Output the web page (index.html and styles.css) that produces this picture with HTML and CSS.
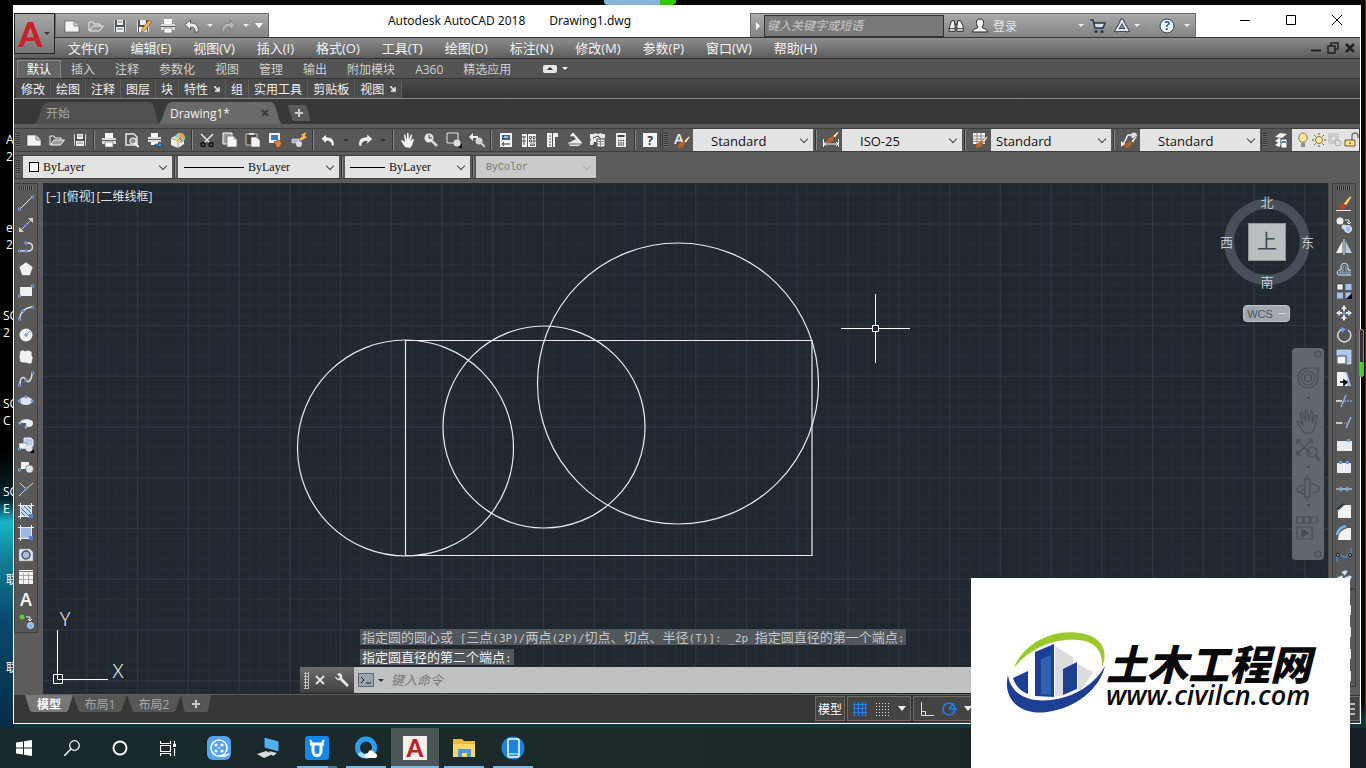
FILE: index.html
```html
<!DOCTYPE html>
<html lang="zh-CN">
<head>
    <meta charset="UTF-8">
    <meta name="viewport" content="width=device-width, initial-scale=1.0">
    <title>Autodesk AutoCAD 2018 - Drawing1.dwg</title>
    <link rel="stylesheet" href="styles.css">
</head>
<body>

<!-- Icon sprite -->
<svg class="sprite" aria-hidden="true">
    <symbol id="i-new" viewBox="0 0 16 16"><path d="M1 3h9l5 5v6H1z" fill="#f4f4f4" stroke="#4a4a4a" stroke-width=".6"/><path d="M10 3v5h5" fill="#ccc" stroke="#777" stroke-width=".8"/></symbol>
    <symbol id="i-open" viewBox="0 0 16 16"><path d="M1 13V4h4l1 2h6v2" fill="none" stroke="#f0f0f0"/><path d="M1.500 13L5 8h10.500l-4 5z" fill="#9a9a9a" stroke="#f0f0f0"/></symbol>
    <symbol id="i-save" viewBox="0 0 16 16"><path d="M2 2h12v12H2z" fill="#4b5157"/><path d="M5 2h6v5H5zM4 9h8v5H4z" fill="#f0f0f0"/><path d="M5 11h6M6 4h4" stroke="#777"/><path d="M2.500 2v12M13.500 2v12" stroke="#cfd3d8"/></symbol>
    <symbol id="i-saveas" viewBox="0 0 16 16"><path d="M1 2h12v12H1z" fill="#4b5157"/><path d="M4 2h6v5H4zM3 9h8v5H3z" fill="#f0f0f0"/><path d="M1.500 2v12M12.500 2v12" stroke="#dfe3e8"/><path d="M6 11l7-9 2.500 2-7 9-3 1z" fill="#f0b954" stroke="#7a4b18" stroke-width=".7"/></symbol>
    <symbol id="i-print" viewBox="0 0 16 16"><path d="M4 1h8v5H4z" fill="#fff"/><path d="M1 6h14v6H1z" fill="#dadada"/><path d="M1 8.500h14" stroke="#666"/><path d="M4 10h8v5H4z" fill="#fff" stroke="#777" stroke-width=".7"/></symbol>
    <symbol id="i-preview" viewBox="0 0 16 16"><path d="M2 2h8l3 3v8H2z" fill="none" stroke="#e8e8e8" stroke-width="1.500"/><circle cx="9" cy="9" r="3.200" fill="#8e9498" stroke="#fff"/><path d="M11 11l3.500 4" stroke="#fff" stroke-width="2"/></symbol>
    <symbol id="i-publish" viewBox="0 0 16 16"><path d="M4 1h7v4H4z" fill="#fff"/><path d="M1 5h13v5H1z" fill="#ddd"/><path d="M1 7.500h13" stroke="#666"/><path d="M4 10h7v3H4z" fill="#fff"/><path d="M8 12h4v-2l4 3-4 3v-2H8z" fill="#4e8ed2" stroke="#123"  stroke-width=".5"/></symbol>
    <symbol id="i-dwf" viewBox="0 0 16 16"><path d="M1 6l6-3 7 3v6l-6 4-7-3z" fill="#eee"/><path d="M1 6l7 3v7" fill="none" stroke="#999"/><circle cx="10" cy="6" r="5" fill="#8fd3c8"/><path d="M10 1a5 5 0 0 1 5 5h-5z" fill="#e9a44a"/><path d="M5 6a5 5 0 0 0 5 5V6z" fill="#e9e36b"/><path d="M7 9l3-3 2 4" fill="none" stroke="#e4564a"/></symbol>
    <symbol id="i-cut" viewBox="0 0 16 16"><path d="M2 2l9 9M14 2l-9 9" stroke="#e6e6e6" stroke-width="1.500"/><circle cx="4" cy="12.500" r="2" fill="none" stroke="#111" stroke-width="1.500"/><circle cx="12" cy="12.500" r="2" fill="none" stroke="#111" stroke-width="1.500"/></symbol>
    <symbol id="i-copy" viewBox="0 0 16 16"><path d="M1 1h9v11H1z" fill="#999" stroke="#fff"/><path d="M5 4h6l4 4v7H5z" fill="#f5f5f5" stroke="#666" stroke-width=".7"/><path d="M11 4v4h4" fill="#ccc"/></symbol>
    <symbol id="i-paste" viewBox="0 0 16 16"><path d="M1 2h11v11H1z" fill="#49433a" stroke="#cfc8b8"/><path d="M4 1h5v2H4z" fill="#ddd"/><path d="M6 5h5l4 3v7H6z" fill="#f5f5f5" stroke="#666" stroke-width=".7"/></symbol>
    <symbol id="i-match" viewBox="0 0 16 16"><path d="M1 1h11v10H1z" fill="#f0f0f0"/><path d="M3 3h7v5H3z" fill="#3f79c4"/><path d="M6 10l5-2 3 3-2 4-3 1z" fill="#d88a35" stroke="#6c3514" stroke-width=".7"/></symbol>
    <symbol id="i-block" viewBox="0 0 16 16"><path d="M1 7h7v4H1z" fill="#a8b8cc" stroke="#eee" stroke-width=".6"/><circle cx="8" cy="12" r="3" fill="#d7dce2"/><path d="M8 7l4-3-2-1 5-3-1 4 2 1-6 4z" fill="#f3bd4e"/></symbol>
    <symbol id="i-undo" viewBox="0 0 16 16"><path d="M1 6.500L6.500 2v3C12 5 15 8 14 14h-3c1-3-1-5-4.500-5v3z" fill="#f4f4f4" stroke="#444" stroke-width=".8"/></symbol>
    <symbol id="i-redo" viewBox="0 0 16 16"><path d="M15.500 7L10 2v3C4 5 1 8 2 14h3c-1-3 1-5 5-5v3z" fill="currentColor" stroke="#555" stroke-width=".5"/></symbol>
    <symbol id="i-pan" viewBox="0 0 16 16"><path d="M5 15L1 9l1-1 3 2-1-7 1-1 2 6V1h1.500l.5 7 2-6 1 .5-1 7 2-3 1 1-2 6-2 2.500z" fill="#f4f4f4"/></symbol>
    <symbol id="i-zoom" viewBox="0 0 16 16"><circle cx="6" cy="6" r="4.500" fill="#e8e8e8"/><path d="M6 3v3h3" stroke="#444" fill="none"/><path d="M9 9l5 5" stroke="#d7d7d7" stroke-width="2.500"/></symbol>
    <symbol id="i-zoomwin" viewBox="0 0 16 16"><path d="M1 1h11v10H1z" fill="none" stroke="#e8e8e8"/><circle cx="11" cy="11" r="3.500" fill="#ddd"/><path d="M12 16h4v-4z" fill="#000"/></symbol>
    <symbol id="i-zoomprev" viewBox="0 0 16 16"><path d="M0 5l4-4v3h5v2H4v3z" fill="#eee"/><circle cx="10" cy="9" r="3.500" fill="#d5d5d5"/><path d="M12 11l4 4" stroke="#ccc" stroke-width="2"/></symbol>
    <symbol id="i-props" viewBox="0 0 16 16"><path d="M2 1h12v14H2z" fill="#f4f4f4"/><path d="M4 3h8v5H4z" fill="#49637f"/><path d="M6 4h4v2H6z" fill="#8fbce8"/><path d="M4 12h8M6 10l-2 2 2 2" stroke="#333" fill="none"/></symbol>
    <symbol id="i-dc" viewBox="0 0 16 16"><path d="M1 2h14v13H1z" fill="#f4f4f4"/><path d="M6.500 2v13M3 4v9M1 5h4M1 9h4" stroke="#555"/><path d="M8.500 4.500h2v2h-2zM12 4.500h2v2h-2zM8.500 8h2v2h-2zM12 8h2v2h-2zM9.500 12h4v1.500h-4z" fill="#f4f4f4" stroke="#444" stroke-width=".8"/></symbol>
    <symbol id="i-palette" viewBox="0 0 16 16"><path d="M3 1h11v4h-3v10H3z" fill="#eee"/><path d="M5 4h2M5 7h2M5 10h2M5 13h2M8.500 1v14" stroke="#555"/></symbol>
    <symbol id="i-sheet" viewBox="0 0 16 16"><path d="M1 11l8-4 6 4-3 3H3z" fill="#e6e6e6"/><path d="M4 4l2-2 8 9" stroke="#fff" stroke-width="2" fill="none"/><path d="M2 12h12" stroke="#666"/></symbol>
    <symbol id="i-markup" viewBox="0 0 16 16"><path d="M0 2h4l1-1 3 1 3-1 1 1h3v4l-2 1 1 3H4l-1 3H0V9l1-1-1-2z" fill="#e8e8e8"/><path d="M3 6l5-2 3 3" stroke="#444" fill="none"/><path d="M7 7h8v8H7z" fill="#fff" stroke="#444"/><path d="M8 9.500h6M8 12h6M10.500 8v6" stroke="#888"/></symbol>
    <symbol id="i-calc" viewBox="0 0 16 16"><path d="M3 1h10v14H3z" fill="#f0f0f0"/><path d="M4.500 3h7v2h-7z" fill="#444"/><path d="M5 8.500h6M5 11h6M5 13h6" stroke="#555" stroke-width="1.500" stroke-dasharray="1.500 .8"/></symbol>
    <symbol id="i-help" viewBox="0 0 16 16"><path d="M1 1h14v14H1z" fill="#f4f4f4"/><text x="8" y="13" text-anchor="middle" class="svg-bold" fill="#333">?</text></symbol>
    <symbol id="i-brush" viewBox="0 0 16 16"><path d="M6 11l4-2 1 2-2 4-4 1-2-1z" fill="#b9622a"/><path d="M10 9l5-5 1 1-4 6z" fill="#f4e7d3" stroke="#6c3514" stroke-width=".5"/></symbol>
    <symbol id="i-textstyle" viewBox="0 0 16 16"><text x="0" y="12" class="svg-style" fill="#eee">A</text><use href="#i-brush"/></symbol>
    <symbol id="i-dimstyle" viewBox="0 0 16 16"><path d="M.5 7v8M15.500 7v8M1 12h14M3 10l-2 2 2 2M13 10l2 2-2 2" stroke="#f4f4f4" fill="none"/><use href="#i-brush" y="-5"/></symbol>
    <symbol id="i-tablestyle" viewBox="0 0 16 16"><path d="M1 1h12v11H1z" fill="#f4f4f4"/><path d="M1 4h12M1 7h12M1 9.500h12M5 1v11M9 1v11" stroke="#8b8b8b"/><use href="#i-brush"/></symbol>
    <symbol id="i-mleader" viewBox="0 0 16 16"><path d="M2 13L7 3h4" stroke="#f4f4f4" stroke-width="1.500" fill="none"/><path d="M0 9v6l4-3z" fill="#eee"/><circle cx="13" cy="3.500" r="3" fill="#ddd"/><use href="#i-brush"/></symbol>
    <symbol id="i-layers" viewBox="0 0 16 16"><path d="M2 5l5-4 7 1-5 4zM2 9l4-3 4 2-4 3zM2 13l4-3 4 2-4 3z" fill="#f4f4f4"/><path d="M8 7h6v9H8z" fill="#fff" stroke="#456"/><path d="M9 9h4v2H9z" fill="#4c84c8"/></symbol>
    <symbol id="i-bulb" viewBox="0 0 16 16"><path d="M6 10C2 7 4 1 8 1s6 6 2 9z" fill="#ffe9a0" stroke="#6a5727" stroke-width=".8"/><path d="M6 11h4v4H6z" fill="#8b8b8b"/></symbol>
    <symbol id="i-sun" viewBox="0 0 16 16"><circle cx="8" cy="8" r="3.500" fill="#ffe9a0" stroke="#8a7337"/><path d="M8 1v2M8 13v2M1 8h2M13 8h2M3 3l1.500 1.500M11.500 11.500L13 13M13 3l-1.500 1.500M4.500 11.500L3 13" stroke="#6a5727"/></symbol>
    <symbol id="i-vpfreeze" viewBox="0 0 16 16"><path d="M2 2h9v9H2zM4 4h5v5H4z" fill="none" stroke="#b0b0b0"/><circle cx="11" cy="11" r="3" fill="#ddd" stroke="#aaa"/></symbol>
    <symbol id="i-lock" viewBox="0 0 16 16"><path d="M9 8V4a3 3 0 0 1 6 0v2" fill="none" stroke="#777" stroke-width="1.500"/><path d="M2 8h10v6H2z" fill="#ffe28a" stroke="#6a5727"/><path d="M7 10v2" stroke="#333"/></symbol>

    <!-- draw tools -->
    <symbol id="d-line" viewBox="0 0 16 16"><path d="M2 14L14 2" stroke="#eee"/><path d="M.5 13h2v2h-2zM13.500 1h2v2h-2z" fill="#223" stroke="#7fb0ea"/></symbol>
    <symbol id="d-xline" viewBox="0 0 16 16"><path d="M2 14L14 2" stroke="#d0d0d0"/><path d="M1 15v-5l5 5zM15 1v5l-5-5z" fill="#d0d0d0"/><path d="M7 7h2v2H7z" fill="#223" stroke="#6e88f5"/></symbol>
    <symbol id="d-pline" viewBox="0 0 16 16"><path d="M1 12h9c6 0 6-8 0-8H8" stroke="#ddd" stroke-width="1.500" fill="none"/><path d="M.5 11h2v2h-2zM7 11h2v2H7zM7 3h2v2H7z" fill="#223" stroke="#7fb0ea"/></symbol>
    <symbol id="d-polygon" viewBox="0 0 16 16"><path d="M8 1l7 5-3 8.500H4L1 6z" fill="#eef0f2" stroke="#444" stroke-width=".5"/></symbol>
    <symbol id="d-rect" viewBox="0 0 16 16"><path d="M2 4h12v9H2z" fill="#eef0f2"/><path d="M.5 12h2v2h-2zM13.500 2h2v2h-2z" fill="#223" stroke="#7fb0ea"/></symbol>
    <symbol id="d-arc" viewBox="0 0 16 16"><path d="M2 14C2 8 6 3 14 2" stroke="#ddd" stroke-width="1.500" fill="none"/><path d="M.5 13h2v2h-2zM4 5h2v2H4zM13.500 1h2v2h-2z" fill="#223" stroke="#7fb0ea"/></symbol>
    <symbol id="d-circle" viewBox="0 0 16 16"><circle cx="8" cy="8" r="6.500" fill="#eef0f2"/><path d="M7 7h2v2H7zM9 7l3-3" fill="none" stroke="#5f92cf"/></symbol>
    <symbol id="d-cloud" viewBox="0 0 16 16"><path d="M2 2q3-2 5 0 4-2 7 1-1 3 1 6-1 3-1 5-3 2-5 0-4 0-7-1 0-3-1-5 1-3 1-6z" fill="#f2f2f2" stroke="#444" stroke-width=".5"/></symbol>
    <symbol id="d-spline" viewBox="0 0 16 16"><path d="M2 14C2 5 6 5 8 9s6 0 6-7" stroke="#ddd" stroke-width="1.500" fill="none"/><path d="M.5 13h2v2h-2zM7 8h2v2H7zM13.500 1h2v2h-2z" fill="#223" stroke="#7fb0ea"/></symbol>
    <symbol id="d-ellipse" viewBox="0 0 16 16"><ellipse cx="8" cy="8" rx="6.500" ry="4" fill="#dfe4ee"/><path d="M.5 7h2v2h-2zM13 7h2v2h-2zM7 3h2v2H7z" fill="#9ab" stroke="#6f9edc"/></symbol>
    <symbol id="d-earc" viewBox="0 0 16 16"><path d="M2 8c0-5 13-5 13 0s-6 4-7 4V8z" fill="#eef0f2"/><path d="M1 7h2v2H1zM7 11h2v2H7z" fill="#dfe4ee" stroke="#6f9edc"/></symbol>
    <symbol id="d-insert" viewBox="0 0 16 16"><path d="M6 1h7l2 2v6H6z" fill="#b8cdea" stroke="#eee"/><path d="M1 6h8v6H1z" fill="#eef0f2" stroke="#555" stroke-width=".5"/><circle cx="11" cy="11" r="3.500" fill="#dfe4ea"/><path d="M.5 11h2v2h-2z" fill="#223" stroke="#7fb0ea"/><path d="M12 16h4v-4z" fill="#000"/></symbol>
    <symbol id="d-mkblock" viewBox="0 0 16 16"><path d="M3 3h8v7H3z" fill="#eef0f2"/><circle cx="11.500" cy="10" r="4" fill="#dfe4ea" stroke="#555" stroke-width=".6"/><path d="M.5 10h2v2h-2z" fill="#223" stroke="#7fb0ea"/></symbol>
    <symbol id="d-point" viewBox="0 0 16 16"><path d="M2 2l6 6 7-6M8 8l-7 7" stroke="#cfd8d8" fill="none"/><path d="M7 7h2v2H7z" fill="#223" stroke="#7fb0ea"/></symbol>
    <symbol id="d-hatch" viewBox="0 0 16 16"><path d="M3 3h10v10H3z" fill="#c5d8f3"/><path d="M3 9l4 4M3 5l8 8M6 3l7 7M10 3l3 3" stroke="#456e9f"/><path d="M0 2.500h16M0 13.500h11M2.500 0v16M13.500 0v11" stroke="#f0f0f0"/><path d="M11 11h4v4h-4z" fill="#4e83ce"/></symbol>
    <symbol id="d-grad" viewBox="0 0 16 16"><path d="M3 3h10v10H3z" fill="#9db9e8"/><path d="M0 2.500h16M0 13.500h11M2.500 0v16M13.500 0v11" stroke="#f0f0f0"/><path d="M11 11h4v4h-4z" fill="#4e83ce"/></symbol>
    <symbol id="d-region" viewBox="0 0 16 16"><path d="M1 2h11l3 3v9H1z" fill="#dfe7f2" stroke="#888" stroke-width=".5"/><circle cx="8" cy="8" r="4" fill="#aebccd" stroke="#3f5572" stroke-width="1.500"/></symbol>
    <symbol id="d-table" viewBox="0 0 16 16"><path d="M1 1h14v14H1z" fill="#f4f4f4"/><path d="M1 2.500h14" stroke="#778"/><path d="M1 6.500h14M1 10.500h14M5.500 4v11M10.500 4v11" stroke="#aaa"/></symbol>
    <symbol id="d-mtext" viewBox="0 0 16 16"><text x="8" y="15" text-anchor="middle" class="svg-big" fill="#fff">A</text></symbol>
    <symbol id="d-addsel" viewBox="0 0 16 16"><circle cx="4" cy="4" r="3" fill="#6cc04a" stroke="#2d5c1b" stroke-width=".6"/><circle cx="12.500" cy="12.500" r="3" fill="#7fb6ee" stroke="#e6f0fa" stroke-width=".8"/><path d="M8 4h4v4M10 6l2 2 2-2" stroke="#eee" fill="none"/></symbol>

    <!-- modify tools -->
    <symbol id="m-erase" viewBox="0 0 16 16"><path d="M0 15.500h15" stroke="#eee"/><path d="M7 9l7-8 2 1-6 9z" fill="#f6d67a" stroke="#5a3a10" stroke-width=".6"/><path d="M3 14l1-4 3-2 3 2-1 3-3 2z" fill="#b9432a"/></symbol>
    <symbol id="m-copy" viewBox="0 0 16 16"><circle cx="4" cy="4" r="3.500" fill="#eee"/><circle cx="12" cy="12" r="3.500" fill="#9fc2ec" stroke="#eaf2fb"/><circle cx="8" cy="10" r="2.500" fill="#c9dcf3"/><path d="M9 3h4v4M11 5l2 2 2-2" stroke="#eee" fill="none"/></symbol>
    <symbol id="m-mirror" viewBox="0 0 16 16"><path d="M6.500 2v12H0z" fill="#eee"/><path d="M9.500 2v12H16z" fill="#b9cbe0"/><path d="M8 0v16" stroke="#eee"/></symbol>
    <symbol id="m-offset" viewBox="0 0 16 16"><path d="M15 14H3c-3-1-2-5 1-5h1V6c0-5 7-5 7 0v3h3" fill="none" stroke="#eee"/><path d="M15 12H4c-1 0-1-1 0-1h3V6c0-2 3-2 3 0v5h5" fill="none" stroke="#86aee0"/></symbol>
    <symbol id="m-array" viewBox="0 0 16 16"><path d="M1 1h6v6H1z" fill="#f0f0f0" stroke="#222" stroke-width=".6"/><path d="M9.500 1h6v6h-6zM1 9.500h6v6H1zM9.500 9.500h6v6h-6z" fill="#9fc2ec"/><path d="M10 16h6v-6z" fill="#000"/></symbol>
    <symbol id="m-move" viewBox="0 0 16 16"><path d="M8 0l3 4H9v2H7V4H5zM8 16l3-4H9v-2H7v2H5zM0 8l4-3v2h2v2H4v2zM16 8l-4-3v2h-2v2h2v2z" fill="#e3e9f0"/><path d="M7 7h2v2H7z" fill="#223" stroke="#7fb0ea"/></symbol>
    <symbol id="m-rotate" viewBox="0 0 16 16"><path d="M7 2a6.500 6.500 0 1 0 5 1" fill="none" stroke="#ddd" stroke-width="1.500"/><path d="M5 0l5 2-4 4z" fill="#6f9ff0"/></symbol>
    <symbol id="m-scale" viewBox="0 0 16 16"><path d="M1 1h14v14H1z" fill="#a8c6ee" stroke="#eee" stroke-width=".6"/><path d="M1 7h9v8H1z" fill="#f4f4f4" stroke="#444"/></symbol>
    <symbol id="m-stretch" viewBox="0 0 16 16"><path d="M2 1h9l4 14H2z" fill="#9fc2ec"/><path d="M1 1h7l3 4v10H1z" fill="#f4f4f4"/><path d="M4 11h6M8 9l3 2-3 3z" stroke="#000" stroke-width="1.500"/></symbol>
    <symbol id="m-trim" viewBox="0 0 16 16"><path d="M0 8h6" stroke="#eee" stroke-width="1.500"/><path d="M8 8h8" stroke="#8eb8ea" stroke-dasharray="2 1"/><path d="M5 14L10 2" stroke="#8eb8ea" stroke-width="1.500"/></symbol>
    <symbol id="m-extend" viewBox="0 0 16 16"><path d="M0 8h6" stroke="#eee" stroke-width="1.500"/><path d="M6 8h6" stroke="#aaa" stroke-dasharray="1 1"/><path d="M10 13L15 2" stroke="#8eb8ea" stroke-width="1.500"/></symbol>
    <symbol id="m-breakpt" viewBox="0 0 16 16"><path d="M1 4h15v10H1z" fill="#e8ebf0"/><path d="M11 2h3v3h-3z" fill="#6f9edc"/></symbol>
    <symbol id="m-break" viewBox="0 0 16 16"><path d="M1 4h14v10H1z" fill="#e8ebf0"/><path d="M3 2h3v3H3zM10 2h3v3h-3z" fill="#6f9edc"/></symbol>
    <symbol id="m-join" viewBox="0 0 16 16"><path d="M0 8h16" stroke="#e6e6e6"/><path d="M4 5l4 3-4 3zM12 5L8 8l4 3z" fill="#7fa8e6"/></symbol>
    <symbol id="m-chamfer" viewBox="0 0 16 16"><path d="M2 8l7-6h6v13H2z" fill="#f2f2f2"/><path d="M1 7l7-6" stroke="#222" stroke-width="2"/><path d="M1 8l7-6" stroke="#7faee6"/></symbol>
    <symbol id="m-fillet" viewBox="0 0 16 16"><path d="M2 15c0-8 5-11 10-12h3v12z" fill="#f2f2f2"/><path d="M1 10c1-5 4-8 9-9" stroke="#7faee6" stroke-width="2.500" fill="none"/></symbol>
    <symbol id="m-blend" viewBox="0 0 16 16"><path d="M1 15v-4c3-8 6 2 9-1 3-2 1-4 5-4V1" stroke="#4f86c0" stroke-width="1.500" fill="none"/><circle cx="2" cy="8" r="1.500" stroke="#112" fill="#9bc"/><circle cx="14" cy="8" r="1.500" stroke="#112" fill="#9bc"/></symbol>
    <symbol id="m-explode" viewBox="0 0 16 16"><path d="M5 3l4-2 3 1-3 5zM1 8l6-2v5l-5 3zM9 8l5-2 2 2-3 6H8z" fill="#cfe0ef" stroke="#4b6780" stroke-width=".6"/></symbol>
</svg>

<div class="desktop">
    <div class="desktop-labels">
        <span class="label-a">A<br>2</span>
        <span class="label-e">e<br>2</span>
        <span>SC<br>2</span>
        <span>SC<br>C</span>
        <span>SC<br>E</span>
        <span class="label-e">联</span>
        <span class="label-e">联</span>
    </div>
    <div class="desktop-widget"></div>
    <div class="desktop-meter"></div>

    <div class="window">
        <button class="app-button" aria-label="应用程序菜单"><span class="app-logo">A</span><i class="caret dark"></i></button>

        <header class="titlebar">
            <div class="quick-access">
                <button aria-label="新建"><svg><use href="#i-new"/></svg></button>
                <button aria-label="打开"><svg><use href="#i-open"/></svg></button>
                <button aria-label="保存"><svg><use href="#i-save"/></svg></button>
                <button aria-label="另存为"><svg><use href="#i-saveas"/></svg></button>
                <button aria-label="打印"><svg><use href="#i-print"/></svg></button>
                <button aria-label="放弃"><svg><use href="#i-undo"/></svg></button>
                <i class="caret"></i>
                <button class="faded" aria-label="重做"><svg><use href="#i-redo"/></svg></button>
                <i class="caret"></i>
                <button class="customize" aria-label="自定义"><i class="caret big"></i></button>
            </div>
            <h1 class="title"><span>Autodesk AutoCAD 2018</span><span>Drawing1.dwg</span></h1>
            <div class="infocenter">
                <button class="expand" aria-label="展开"><i class="caret right"></i></button>
                <input type="text" class="search" placeholder="键入关键字或短语" aria-label="搜索">
                <button aria-label="查找"><svg viewBox="0 0 18 16"><path d="M2 8l2-6h3l1 6v6H1zM10 8l1-6h3l3 6v6h-7z" fill="#eee" stroke="#222"/><path d="M8 6h2M1 11h7M10 11h7" stroke="#222"/></svg></button>
                <button class="login"><svg viewBox="0 0 16 16"><path d="M8 1c5 0 4 6 2 8 0 2 5 1 5.500 5H.5C1 10 6 11 6 9 4 7 3 1 8 1z" fill="#f2f2f2" stroke="#222"/></svg>登录</button>
                <i class="caret"></i>
                <button aria-label="商店"><svg viewBox="0 0 16 16"><path d="M0 2h3l2 8h8l2-5H4" fill="#d8dde6" stroke="#26344f" stroke-width="1.500"/><circle cx="6" cy="13.500" r="1.500" fill="#26344f"/><circle cx="12" cy="13.500" r="1.500" fill="#26344f"/></svg></button>
                <button aria-label="Autodesk 360"><svg viewBox="0 0 16 16"><path d="M8 3l5 9H3z" fill="none" stroke="#26344f" stroke-width="3.500"/><circle cx="8" cy="3" r="2" fill="#dfe3ea" stroke="#26344f"/><circle cx="3" cy="12" r="2" fill="#dfe3ea" stroke="#26344f"/><circle cx="13" cy="12" r="2" fill="#dfe3ea" stroke="#26344f"/><path d="M8 3l5 9H3z" fill="none" stroke="#dfe3ea" stroke-width="2"/></svg></button>
                <i class="caret"></i>
                <button class="help" aria-label="帮助"><svg viewBox="0 0 16 16"><circle cx="8" cy="8" r="7" fill="#f4f7fa" stroke="#26344f"/><text x="8" y="12" text-anchor="middle" class="svg-bold" fill="#2460b0">?</text></svg></button>
                <i class="caret"></i>
            </div>
            <div class="window-controls">
                <button aria-label="最小化"><svg viewBox="0 0 12 12"><path d="M1 6.500h10" stroke="#000"/></svg></button>
                <button aria-label="最大化"><svg viewBox="0 0 12 12"><path d="M1.500 1.500h9v9h-9z" stroke="#000" fill="none"/></svg></button>
                <button aria-label="关闭"><svg viewBox="0 0 12 12"><path d="M1 1l10 10M11 1L1 11" stroke="#000"/></svg></button>
            </div>
        </header>

        <nav class="menubar">
            <a href="#">文件(F)</a>
            <a href="#">编辑(E)</a>
            <a href="#">视图(V)</a>
            <a href="#">插入(I)</a>
            <a href="#">格式(O)</a>
            <a href="#">工具(T)</a>
            <a href="#">绘图(D)</a>
            <a href="#">标注(N)</a>
            <a href="#">修改(M)</a>
            <a href="#">参数(P)</a>
            <a href="#">窗口(W)</a>
            <a href="#">帮助(H)</a>
            <div class="doc-controls">
                <button aria-label="最小化文档"><svg viewBox="0 0 12 12"><path d="M1 8.500h10" stroke="#222" stroke-width="2"/></svg></button>
                <button aria-label="还原文档"><svg viewBox="0 0 12 12"><path d="M4 4V1h7v6H8M1 4h7v7H1z" stroke="#222" stroke-width="1.500" fill="none"/></svg></button>
                <button aria-label="关闭文档"><svg viewBox="0 0 12 12"><path d="M2 2l8 8M10 2l-8 8" stroke="#222" stroke-width="2.500"/></svg></button>
            </div>
        </nav>

        <nav class="ribbon-tabs">
            <a href="#" class="active">默认</a>
            <a href="#">插入</a>
            <a href="#">注释</a>
            <a href="#">参数化</a>
            <a href="#">视图</a>
            <a href="#">管理</a>
            <a href="#">输出</a>
            <a href="#">附加模块</a>
            <a href="#">A360</a>
            <a href="#">精选应用</a>
            <button class="ribbon-toggle" aria-label="最小化功能区"><i></i></button>
            <i class="caret"></i>
        </nav>

        <div class="ribbon-panels">
            <button>修改</button>
            <button>绘图</button>
            <button>注释</button>
            <button>图层</button>
            <button>块</button>
            <button>特性<svg class="launcher" viewBox="0 0 6 6"><path d="M0 0l4 4M5 1v4H1" stroke="#eee" fill="none" stroke-width="1.500"/></svg></button>
            <button>组</button>
            <button>实用工具</button>
            <button>剪贴板</button>
            <button>视图<svg class="launcher" viewBox="0 0 6 6"><path d="M0 0l4 4M5 1v4H1" stroke="#eee" fill="none" stroke-width="1.500"/></svg></button>
        </div>

        <div class="file-tabs">
            <button class="file-tab"><svg class="tab-shape" viewBox="0 0 124 22" preserveAspectRatio="none"><path d="M0 22C7 19 5 1 14 0h99c6 0 6 3 8 8l3 14z"/></svg><span>开始</span></button>
            <button class="file-tab active"><svg class="tab-shape" viewBox="0 0 124 22" preserveAspectRatio="none"><path d="M0 22C7 19 5 1 14 0h99c6 0 6 18 11 22z"/></svg><span>Drawing1*</span><svg class="tab-close" viewBox="0 0 8 8"><path d="M1 1l6 6M7 1L1 7" stroke="#3c3c3c" stroke-width="2"/></svg></button>
            <button class="file-add" aria-label="新图形"><svg viewBox="0 0 26 16"><path d="M1 0h18c4 2 3 10 6 16H8C4 14 5 4 1 0z" fill="#5a5a5a"/><path d="M13 4v8M9 8h8" stroke="#ccc" stroke-width="2"/></svg></button>
        </div>

        <div class="toolbar-row">
            <div class="toolbar">
                <i class="grip"></i>
                <button aria-label="新建"><svg><use href="#i-new"/></svg></button>
                <button aria-label="打开"><svg><use href="#i-open"/></svg></button>
                <button aria-label="保存"><svg><use href="#i-save"/></svg></button>
                <i class="sep"></i>
                <button aria-label="打印"><svg><use href="#i-print"/></svg></button>
                <button aria-label="打印预览"><svg><use href="#i-preview"/></svg></button>
                <button aria-label="发布"><svg><use href="#i-publish"/></svg></button>
                <button aria-label="三维 DWF"><svg><use href="#i-dwf"/></svg></button>
                <i class="sep"></i>
                <button aria-label="剪切"><svg><use href="#i-cut"/></svg></button>
                <button aria-label="复制"><svg><use href="#i-copy"/></svg></button>
                <button aria-label="粘贴"><svg><use href="#i-paste"/></svg></button>
                <button aria-label="特性匹配"><svg><use href="#i-match"/></svg></button>
                <button aria-label="块编辑器"><svg><use href="#i-block"/></svg></button>
                <i class="sep"></i>
                <button aria-label="放弃"><svg><use href="#i-undo"/></svg></button>
                <span class="drop"><i class="caret dark"></i></span>
                <button aria-label="重做"><svg><use href="#i-redo"/></svg></button>
                <span class="drop"><i class="caret dark"></i></span>
                <i class="sep"></i>
                <button aria-label="平移"><svg><use href="#i-pan"/></svg></button>
                <button aria-label="实时缩放"><svg><use href="#i-zoom"/></svg></button>
                <button aria-label="窗口缩放"><svg><use href="#i-zoomwin"/></svg></button>
                <button aria-label="缩放上一个"><svg><use href="#i-zoomprev"/></svg></button>
                <i class="sep"></i>
                <button aria-label="特性"><svg><use href="#i-props"/></svg></button>
                <button aria-label="设计中心"><svg><use href="#i-dc"/></svg></button>
                <button aria-label="工具选项板"><svg><use href="#i-palette"/></svg></button>
                <button aria-label="图纸集"><svg><use href="#i-sheet"/></svg></button>
                <button aria-label="标记集"><svg><use href="#i-markup"/></svg></button>
                <button aria-label="计算器"><svg><use href="#i-calc"/></svg></button>
                <i class="sep"></i>
                <button aria-label="帮助"><svg><use href="#i-help"/></svg></button>
            </div>
            <div class="toolbar styles">
                <i class="grip"></i>
                <button aria-label="文字样式"><svg><use href="#i-textstyle"/></svg></button>
                <span class="combo"><select aria-label="文字样式"><option>Standard</option></select></span>
                <i class="sep"></i>
                <button aria-label="标注样式"><svg><use href="#i-dimstyle"/></svg></button>
                <span class="combo"><select aria-label="标注样式"><option>ISO-25</option></select></span>
                <i class="sep"></i>
                <button aria-label="表格样式"><svg><use href="#i-tablestyle"/></svg></button>
                <span class="combo tight"><select aria-label="表格样式"><option>Standard</option></select></span>
                <i class="sep"></i>
                <button aria-label="多重引线样式"><svg><use href="#i-mleader"/></svg></button>
                <span class="combo"><select aria-label="多重引线样式"><option>Standard</option></select></span>
            </div>
            <div class="toolbar layers">
                <i class="grip"></i>
                <button aria-label="图层特性"><svg><use href="#i-layers"/></svg></button>
                <div class="layer-box">
                    <svg><use href="#i-bulb"/></svg>
                    <svg><use href="#i-sun"/></svg>
                    <svg><use href="#i-vpfreeze"/></svg>
                    <svg><use href="#i-lock"/></svg>
                </div>
            </div>
        </div>

        <div class="toolbar-row properties">
            <div class="toolbar">
                <i class="grip"></i>
                <span class="combo bylayer color"><i class="swatch"></i><select aria-label="颜色"><option>ByLayer</option></select></span>
                <i class="sep"></i>
                <span class="combo bylayer linetype"><i class="stroke"></i><select aria-label="线型"><option>ByLayer</option></select></span>
                <i class="sep"></i>
                <span class="combo bylayer lineweight"><i class="stroke short"></i><select aria-label="线宽"><option>ByLayer</option></select></span>
                <i class="sep"></i>
                <span class="combo bycolor"><select aria-label="打印样式" disabled><option>ByColor</option></select></span>
            </div>
        </div>

        <main class="workspace">
            <div class="dock">
                <div class="toolbar vertical">
                    <i class="grip"></i>
                    <button aria-label="直线"><svg><use href="#d-line"/></svg></button>
                    <button aria-label="构造线"><svg><use href="#d-xline"/></svg></button>
                    <button aria-label="多段线"><svg><use href="#d-pline"/></svg></button>
                    <button aria-label="多边形"><svg><use href="#d-polygon"/></svg></button>
                    <button aria-label="矩形"><svg><use href="#d-rect"/></svg></button>
                    <button aria-label="圆弧"><svg><use href="#d-arc"/></svg></button>
                    <button aria-label="圆"><svg><use href="#d-circle"/></svg></button>
                    <button aria-label="修订云线"><svg><use href="#d-cloud"/></svg></button>
                    <button aria-label="样条曲线"><svg><use href="#d-spline"/></svg></button>
                    <button aria-label="椭圆"><svg><use href="#d-ellipse"/></svg></button>
                    <button aria-label="椭圆弧"><svg><use href="#d-earc"/></svg></button>
                    <button aria-label="插入块"><svg><use href="#d-insert"/></svg></button>
                    <button aria-label="创建块"><svg><use href="#d-mkblock"/></svg></button>
                    <button aria-label="点"><svg><use href="#d-point"/></svg></button>
                    <button aria-label="图案填充"><svg><use href="#d-hatch"/></svg></button>
                    <button aria-label="渐变色"><svg><use href="#d-grad"/></svg></button>
                    <button aria-label="面域"><svg><use href="#d-region"/></svg></button>
                    <button aria-label="表格"><svg><use href="#d-table"/></svg></button>
                    <button aria-label="多行文字"><svg><use href="#d-mtext"/></svg></button>
                    <button aria-label="添加选定对象"><svg><use href="#d-addsel"/></svg></button>
                </div>
            </div>

            <section class="canvas">
                <svg class="drawing">
                    <defs>
                        <!-- grid: 5 minor cells per major cell -->
                        <pattern id="minor" x="43.250" y="40.500" width="10.150" height="10.150" patternUnits="userSpaceOnUse"><path d="M0 .5h10.150M.5 0v10.150" stroke="#262e37"/></pattern>
                        <pattern id="major" x="43.250" y="40.500" width="50.750" height="50.750" patternUnits="userSpaceOnUse"><path d="M0 .5h50.750M.5 0v50.750" stroke="#2f3841"/></pattern>
                    </defs>
                    <rect width="100%" height="100%" fill="url(#minor)"/>
                    <rect width="100%" height="100%" fill="url(#major)"/>
                    <g fill="none" stroke="#e8eaec" stroke-width="1.200">
                        <path d="M362.500 157.500h406.500v215h-406.500z"/>
                        <circle cx="362.500" cy="265" r="108"/>
                        <circle cx="501" cy="244" r="101"/>
                        <circle cx="635" cy="200.500" r="140.500"/>
                    </g>
                    <g fill="none" stroke="#fff">
                        <path d="M798 145.500h31M836 145.500h31M832.500 111v31M832.500 149v31M829.500 142.500h6v6h-6z"/>
                        <path d="M14.500 447v49.500h50.500M10.500 491.500h9v9h-9z"/>
                    </g>
                    <text x="22" y="443" text-anchor="middle" class="ucs">Y</text>
                    <text x="75" y="495" text-anchor="middle" class="ucs">X</text>
                </svg>

                <div class="view-label"><span>[−]</span><span>[俯视]</span><span>[二维线框]</span></div>

                <div class="viewcube">
                    <span class="north">北</span>
                    <span class="west">西</span>
                    <button class="face">上</button>
                    <span class="east">东</span>
                    <span class="south">南</span>
                </div>
                <button class="wcs">WCS<i></i></button>

                <div class="navbar">
                    <svg viewBox="0 0 32 212" fill="none" stroke="#484e54" stroke-width="1.200">
                        <circle cx="26" cy="6" r="3"/>
                        <path d="M6 30a10 10 0 1 0 20 0V20H16A10 10 0 0 0 6 30z"/><circle cx="16" cy="30" r="7"/><circle cx="16" cy="30" r="3.500"/>
                        <path d="M11 83l-6-9 2-1 4 4-3-12 2-1 4 10-1-12h2l2 12 2-11 2 1-1 11 3-8 2 1-3 14-3 3H12z"/>
                        <path d="M5 92l14 14M20 91L5 107M5 97v-5h5M15 91h5v5M5 102v5h5"/><circle cx="20" cy="104" r="5"/><path d="M24 108l4 5" stroke-width="2"/>
                        <path d="M13 131h5v18h-5zM15.500 127v4M15.500 149v4M12 137c-10 2-8 7-2 8M18 136c12 1 12 8 2 9M12 140l-3 5 4 2"/>
                        <path d="M5 169h6v6H5zM12 169h6v6h-6zM19 169h6v6h-6zM5 179h15v12H5z"/><path d="M10 181v8l6-4z" fill="#484e54"/>
                        <path d="M15 50h3M15 119h3M15 157h3" stroke-width="2"/>
                        <circle cx="26" cy="206" r="3"/>
                    </svg>
                </div>

                <div class="command">
                    <p class="history old">指定圆的圆心或<span> [</span>三点<span>(3P)/</span>两点<span>(2P)/</span>切点、切点、半径<span>(T)]: _2p </span>指定圆直径的第一个端点<span>:</span></p>
                    <p class="history">指定圆直径的第二个端点<span>:</span></p>
                    <div class="command-line">
                        <div class="command-tools">
                            <i class="grip"></i>
                            <button aria-label="关闭"><svg viewBox="0 0 16 16"><path d="M4 4l8 8M12 4l-8 8" stroke="#ddd" stroke-width="2"/></svg></button>
                            <button aria-label="自定义"><svg viewBox="0 0 16 16"><path d="M1 4l3 3 2-2-3-3c3-2 6 0 5 4l7 7-2 2-7-7C4 9 1 7 1 4z" fill="#e4e4e4"/></svg></button>
                        </div>
                        <label class="prompt" for="cmd"><svg viewBox="0 0 16 14"><path d="M.5.5h15v13H.5z" fill="#9aa5b0" stroke="#5c6670"/><path d="M3 4l3 3-3 3M8 10h5" stroke="#222" fill="none"/></svg><i class="caret dark"></i></label>
                        <input id="cmd" type="text" placeholder="键入命令">
                    </div>
                </div>
            </section>

            <div class="dock right">
                <div class="toolbar vertical">
                    <i class="grip"></i>
                    <button aria-label="删除"><svg><use href="#m-erase"/></svg></button>
                    <button aria-label="复制"><svg><use href="#m-copy"/></svg></button>
                    <button aria-label="镜像"><svg><use href="#m-mirror"/></svg></button>
                    <button aria-label="偏移"><svg><use href="#m-offset"/></svg></button>
                    <button aria-label="阵列"><svg><use href="#m-array"/></svg></button>
                    <button aria-label="移动"><svg><use href="#m-move"/></svg></button>
                    <button aria-label="旋转"><svg><use href="#m-rotate"/></svg></button>
                    <button aria-label="缩放"><svg><use href="#m-scale"/></svg></button>
                    <button aria-label="拉伸"><svg><use href="#m-stretch"/></svg></button>
                    <button aria-label="修剪"><svg><use href="#m-trim"/></svg></button>
                    <button aria-label="延伸"><svg><use href="#m-extend"/></svg></button>
                    <button aria-label="打断于点"><svg><use href="#m-breakpt"/></svg></button>
                    <button aria-label="打断"><svg><use href="#m-break"/></svg></button>
                    <button aria-label="合并"><svg><use href="#m-join"/></svg></button>
                    <button aria-label="倒角"><svg><use href="#m-chamfer"/></svg></button>
                    <button aria-label="圆角"><svg><use href="#m-fillet"/></svg></button>
                    <button aria-label="光顺曲线"><svg><use href="#m-blend"/></svg></button>
                    <button aria-label="分解"><svg><use href="#m-explode"/></svg></button>
                </div>
                <div class="toolbar vertical">
                    <i class="grip"></i>
                    <button aria-label="前置"><svg><use href="#m-break"/></svg></button>
                    <button aria-label="后置"><svg><use href="#m-break"/></svg></button>
                    <button aria-label="置于对象之上"><svg><use href="#m-break"/></svg></button>
                    <button aria-label="置于对象之下"><svg><use href="#m-break"/></svg></button>
                </div>
            </div>
        </main>

        <footer class="statusbar">
            <div class="layout-tabs">
                <button class="active">模型</button>
                <button>布局1</button>
                <button>布局2</button>
                <button class="add" aria-label="新建布局"><svg viewBox="0 0 10 10"><path d="M5 1v8M1 5h8" stroke="#ccc" stroke-width="2"/></svg></button>
            </div>
            <div class="status-tools">
                <div class="status-group"><button class="model">模型</button></div>
                <div class="status-group">
                    <button aria-label="栅格"><svg viewBox="0 0 16 16"><path d="M1 3.500h14M1 7.500h14M1 11.500h14M2.500 1v14M6.500 1v14M10.500 1v14M13.500 1v14" stroke="#1e82ff" stroke-width="1.200"/></svg></button>
                    <button aria-label="捕捉"><svg viewBox="0 0 16 16"><path d="M1 2.500h14M1 5.500h14M1 8.500h14M1 11.500h14M1 14.500h14" stroke="#ddd" stroke-dasharray="1 2"/></svg></button>
                    <span class="drop"><i class="caret big"></i></span>
                </div>
                <div class="status-group">
                    <button aria-label="正交"><svg viewBox="0 0 16 16"><path d="M3.500 1v13.500H16M3.500 10.500h4v4" stroke="#ddd" fill="none"/></svg></button>
                    <button aria-label="极轴"><svg viewBox="0 0 16 16"><circle cx="8" cy="8" r="6" fill="none" stroke="#1e82ff" stroke-width="1.500"/><path d="M8 8h8M8 8l5-6" stroke="#1e82ff" stroke-width="1.500"/></svg></button>
                    <span class="drop"><i class="caret big"></i></span>
                </div>
                <div class="status-group last">
                    <button aria-label="自定义"><svg viewBox="0 0 16 16"><path d="M1 3h14M1 8h14M1 13h14" stroke="#ddd" stroke-width="1.500"/></svg></button>
                </div>
            </div>
        </footer>
    </div>
</div>

<div class="taskbar">
    <button aria-label="开始"><svg viewBox="0 0 16 16"><path d="M0 2.500l7-1v6H0zM8 1.300l8-1.200v7.400H8zM0 8.500h7v6l-7-1zM8 8.500h8v7.400l-8-1.200z" fill="#fff"/></svg></button>
    <button aria-label="搜索"><svg viewBox="0 0 16 16"><circle cx="10.500" cy="5.500" r="4.800" fill="none" stroke="#fff" stroke-width="1.200"/><path d="M7 9l-7 7" stroke="#fff" stroke-width="1.400"/></svg></button>
    <button aria-label="Cortana"><svg viewBox="0 0 16 16"><circle cx="8" cy="8" r="6.500" fill="none" stroke="#fff" stroke-width="2"/></svg></button>
    <button aria-label="任务视图"><svg viewBox="0 0 16 16"><path d="M.5 1v2.500h10V1M.5 5.500h10v6H.5zM.5 16v-2.500h10V16M14.500 1v3M14.500 8v8" fill="none" stroke="#fff" stroke-width="1.200"/><path d="M13 4h3v3h-3z" fill="#fff"/></svg></button>
    <div class="apps">
        <button aria-label="视频"><svg class="big" viewBox="0 0 24 24"><rect width="24" height="24" rx="6" fill="#55a3ee"/><circle cx="12" cy="12" r="8" fill="none" stroke="#fff" stroke-width="1.500"/><path d="M12 20h6l4-2" stroke="#fff" fill="none" stroke-width="1.500"/><g fill="#fff"><circle cx="9" cy="9" r="1.600"/><circle cx="15" cy="9" r="1.600"/><circle cx="9" cy="15" r="1.600"/><circle cx="15" cy="15" r="1.600"/><circle cx="12" cy="12" r="1"/></g></svg></button>
        <button aria-label="此电脑"><svg class="big" viewBox="0 0 24 24"><path d="M8 1l15 4v11L8 12z" fill="#4fb0f0" stroke="#222"/><path d="M1 18l9-3 7 3-9 4zM13 15l8 2-4 3" fill="#d8dde0"/></svg></button>
        <button class="open stacked" aria-label="U 盘工具"><svg class="big" viewBox="0 0 24 24"><rect width="24" height="24" rx="3" fill="#1687ee"/><path d="M5 8h14M8 8v7c0 6 8 6 8 0V8" fill="none" stroke="#fff" stroke-width="3"/><path d="M5 4l2 3M19 4l-2 3" stroke="#fff" stroke-width="2"/></svg></button>
        <button class="open" aria-label="浏览器"><svg class="big" viewBox="0 0 24 24"><circle cx="12" cy="11.500" r="8.500" fill="none" stroke="#2b9df4" stroke-width="5"/><path d="M5 17a9 9 0 0 0 9 3" stroke="#9fe0fa" stroke-width="4" fill="none"/><path d="M13 22c-3-1-2-5 1-5 1-4 6-3 6 0 4 0 4 5 1 5z" fill="#fff"/></svg></button>
        <button class="open current" aria-label="AutoCAD"><span class="cad-icon">A</span></button>
        <button class="open" aria-label="文件资源管理器"><svg class="big" viewBox="0 0 24 24"><path d="M1 3h9l2 2h11v16H1z" fill="#f2b63a"/><path d="M1 8h22v13H1z" fill="#ffd766"/><path d="M6 21v-8h13v8h-4v-4h-5v4z" fill="#4a9be0"/></svg></button>
        <button class="open" aria-label="手机助手"><svg class="big" viewBox="0 0 24 24"><circle cx="12" cy="12" r="11.500" fill="#1b83e0"/><rect x="7" y="3" width="11" height="18" rx="1.500" fill="none" stroke="#fff" stroke-width="1.500"/><path d="M7 18h11" stroke="#fff"/></svg></button>
    </div>
</div>

<!-- Site badge -->
<div class="brand">
    <svg viewBox="0 0 100 82">
        <path d="M8 36C18 10 48-3 74 1c22 3 29 18 22 34 1-16-7-26-24-27C48 6 24 16 8 36z" fill="#9bc92b"/>
        <path d="M2 43C-4 66 14 84 41 80c30-4 53-24 58-46-10 18-30 31-54 34C20 71 4 60 2 43z" fill="#1c3f94"/>
        <path d="M49 14l18 11v10l-10 5v24h-8zM72 32l15 8-12 18h-3z" fill="#dcdcdc"/>
        <path d="M29 20l19-8v53l-19-1zM57 37l14-7v27l-14 6zM7 46l15-7v23C14 59 9 53 7 46z" fill="#1c3f94"/>
        <path d="M35 27l10-4v40l-10-1z" fill="#2f62b0"/>
    </svg>
    <div class="brand-text">
        <strong>土木工程网</strong>
        <span>www.civilcn.com</span>
    </div>
</div>

</body>
</html>
```
FILE: styles.css
```css
/* --- Base --- */
*,
*::before,
*::after {
    box-sizing: border-box;
}

body {
    margin: 0;
    height: 100vh;
    display: flex;
    flex-direction: column;
    overflow: hidden;
    background: #000;
    font-family: "Open Sans", "Noto Sans CJK SC", sans-serif;
    font-size: 12px;
    color: #e6e6e6;
}

button {
    display: flex;
    align-items: center;
    justify-content: center;
    flex: none;
    padding: 0;
    border: none;
    background: none;
    color: inherit;
    font: inherit;
}

input, select {
    font: inherit;
    border: none;
    border-radius: 0;
    outline: none;
}

a {
    color: inherit;
    text-decoration: none;
}

svg {
    flex: none;
    width: 16px;
    height: 16px;
}

.sprite {
    display: none;
}

.svg-bold {
    font-size: 12px;
    font-weight: 700;
}

.svg-style {
    font-size: 15px;
    font-weight: 600;
}

.svg-big {
    font-size: 18px;
    font-weight: 600;
}

.caret {
    flex: none;
    border: 3px solid transparent;
    border-top-color: #eee;
    border-bottom: none;
}

.caret.dark {
    border-top-color: #333;
}

.caret.big {
    border-width: 5px 4px 0;
}

.caret.right {
    border: 4px solid transparent;
    border-left-color: #fff;
    border-right: none;
}

/* --- Desktop --- */
.desktop {
    position: relative;
    flex: 1;
    min-height: 0;
    display: flex;
    padding: 5px 4px 4px 13px;
    background: linear-gradient(#000 0, #000 450px, #06252e 500px, #19b5c5 522px, #0f7f96 560px, #0a4a6c 620px, #062b49 100%) 0 0 / 14px 100% no-repeat, linear-gradient(#0a0604 700px, #12343c 720px);
    border-right: 1px solid #5a3212;
}

.desktop-labels {
    position: absolute;
    top: 131px;
    left: 0;
    width: 13px;
    overflow: hidden;
    display: grid;
    grid-auto-rows: 88px;
    padding-left: 3px;
    line-height: 17px;
    white-space: nowrap;
    color: #fff;
}

.label-a,
.label-e {
    padding-left: 3px;
}

.desktop-widget {
    position: absolute;
    top: 0;
    left: 604px;
    width: 72px;
    height: 5px;
    background: linear-gradient(90deg, #86b3d6 0 78%, #34c800 78%);
    border-radius: 0 0 4px 4px;
}

.desktop-meter {
    position: absolute;
    z-index: 3;
    top: 329px;
    right: 1px;
    width: 5px;
    height: 48px;
    border: 1px solid #888;
    background: linear-gradient(#333 0 70%, #45d420 70%);
    border-radius: 2px;
}

/* --- Window --- */
.window {
    position: relative;
    flex: 1;
    min-width: 0;
    display: flex;
    flex-direction: column;
    border: 1px solid #fff;
    border-top: none;
    background: #5c5c5c;
    overflow: hidden;
}

.app-button {
    position: absolute;
    z-index: 2;
    top: 8px;
    left: 0;
    width: 41px;
    height: 41px;
    gap: 2px;
    border: 1px solid #222;
    background: linear-gradient(#a8a8a8, #767676);
}

.app-logo {
    font-family: Lato, sans-serif;
    font-size: 34px;
    line-height: 34px;
    font-weight: 900;
    color: #cb2027;
}

.titlebar {
    display: flex;
    height: 32px;
    padding-left: 41px;
    background: #fff;
}

.quick-access,
.infocenter {
    display: flex;
    align-items: center;
    height: 24px;
    margin-top: 8px;
    border: 1px solid #6a6a6a;
    border-bottom: none;
    background: linear-gradient(#aaa, #838383);
}

.quick-access {
    width: 214px;
    padding-left: 4px;
}

.quick-access button {
    width: 24px;
}

.quick-access .caret {
    margin: 0 3px;
}

.quick-access .faded {
    color: #b4b4b4;
}

.quick-access .customize {
    width: 14px;
}

.customize .caret {
    margin: 0;
    border-top-color: #fff;
}

.customize .caret.big {
    margin: 0;
}

.title {
    flex: 1;
    display: flex;
    justify-content: center;
    gap: 24px;
    margin: 0;
    font-family: "Noto Sans", sans-serif;
    font-size: 12px;
    line-height: 32px;
    font-weight: 400;
    color: #111;
    white-space: nowrap;
}

.infocenter {
    flex: none;
    width: 446px;
}

.infocenter button {
    width: 24px;
}

.infocenter .expand {
    width: 13px;
}

.search {
    width: 180px;
    height: 22px;
    padding: 0 2px;
    border: 1px solid #333;
    background: #7a7a7a;
}

.search::placeholder {
    color: #c9c9c9;
    font-style: italic;
}

.infocenter .login {
    width: 64px;
    justify-content: flex-start;
    gap: 5px;
    padding-left: 4px;
    margin-right: auto;
}

.infocenter .caret {
    margin-right: 2px;
}

.infocenter .help {
    width: 32px;
    margin-left: 8px;
    border-left: 1px solid #999;
}

.infocenter .help + .caret {
    margin: 0 5px 0 2px;
}

.infocenter .expand .caret {
    margin: 0;
}

.window-controls {
    display: flex;
    margin-left: 26px;
    height: 30px;
}

.window-controls button {
    width: 46px;
}

.window-controls svg,
.doc-controls svg {
    width: 12px;
    height: 12px;
}

/* --- Menu and ribbon --- */
.menubar {
    display: flex;
    align-items: center;
    gap: 22px;
    height: 22px;
    padding-left: 54px;
    border-top: 1px solid #333;
    border-bottom: 1px solid #333;
    background: linear-gradient(#8e8e8e, #5c5c5c);
    color: #f4f4f4;
    font-size: 13px;
    line-height: 18px;
    white-space: nowrap;
}

.doc-controls {
    display: flex;
    gap: 5px;
    margin-left: auto;
    padding-right: 4px;
}

.ribbon-tabs {
    display: flex;
    align-items: center;
    height: 20px;
    padding-left: 3px;
    border-bottom: 1px solid #333;
    background: #545454;
    color: #cfcfcf;
    white-space: nowrap;
}

.ribbon-tabs a {
    height: 18px;
    padding: 1px 10px 0;
    line-height: 18px;
}

.ribbon-tabs .active {
    border: 1px solid #888;
    border-bottom: none;
    padding: 0 9px;
    background: #666;
    color: #fff;
}

.ribbon-toggle {
    width: 14px;
    height: 8px;
    margin: 0 5px 0 22px;
    border-radius: 2px;
    background: #e6e6e6;
}

.ribbon-toggle i {
    border: 3px solid transparent;
    border-bottom-color: #333;
    border-top: none;
}

.ribbon-panels {
    display: flex;
    height: 20px;
    padding-left: 2px;
    border-bottom: 1px solid #8a8a8a;
    background: linear-gradient(#4c4c4c, #353535);
    color: #f0f0f0;
}

.ribbon-panels button {
    padding: 0 5px;
    border-right: 1px solid #5e5e5e;
    background: #4b4b4b;
}

.launcher {
    width: 6px;
    height: 6px;
    margin-left: 6px;
}

/* --- Drawing file tabs --- */
.file-tabs {
    display: flex;
    align-items: flex-end;
    height: 25px;
    padding-left: 20px;
    background: #383838;
}

.file-tab {
    position: relative;
    justify-content: flex-start;
    width: 124px;
    height: 22px;
    padding-left: 12px;
    color: #a8a8a8;
}

.file-tab span {
    position: relative;
}

.tab-shape {
    position: absolute;
    top: 0;
    left: 0;
    width: 100%;
    height: 100%;
    fill: #505050;
}

.active .tab-shape {
    fill: #6a6a6a;
}

.file-tab.active {
    color: #f2f2f2;
    padding-right: 13px;
}

.tab-close {
    position: relative;
    width: 8px;
    height: 8px;
    margin-left: auto;
}

.file-add {
    height: 22px;
    margin-left: 4px;
}

.file-add svg {
    width: 26px;
}

/* --- Toolbars --- */
.toolbar-row {
    display: flex;
    margin-top: 4px;
    overflow: hidden;
}

.toolbar {
    display: flex;
    flex: none;
    align-items: center;
    height: 24px;
    outline: 1px solid #3e3e3e;
    outline-offset: -1px;
    background: #585858;
}

.toolbar button {
    width: 23px;
    height: 24px;
    color: #f0f0f0;
}

.toolbar .grip {
    flex: none;
    width: 4px;
    height: 14px;
    margin: 0 2px;
    background: repeating-linear-gradient(#2e2e2e 0 1px, #707070 1px 2px);
}

.sep {
    flex: none;
    width: 6px;
    height: 20px;
    border-left: 2px solid transparent;
    border-right: 2px solid transparent;
    background: linear-gradient(90deg, #333 1px, #8a8a8a 1px) content-box;
}

.drop {
    display: flex;
    justify-content: center;
    width: 14px;
}

.combo {
    position: relative;
    display: flex;
    flex: none;
    align-items: center;
    width: 120px;
    height: 22px;
    background: #e3e3e3;
    color: #111;
}

.combo::after {
    content: "";
    position: absolute;
    right: 6px;
    top: 7px;
    width: 6px;
    height: 6px;
    border-right: 1px solid #444;
    border-bottom: 1px solid #444;
    transform: rotate(45deg);
}

.combo select {
    flex: 1;
    min-width: 0;
    height: 22px;
    padding: 2px 0 0 18px;
    appearance: none;
    background: transparent;
    color: inherit;
    font-size: 13px;
}

.combo.tight select {
    padding-left: 5px;
}

.styles,
.layers {
    margin-left: 1px;
}

.layers {
    flex: 1;
    min-width: 0;
    overflow: hidden;
}

.layer-box {
    display: flex;
    flex: 1;
    align-items: center;
    height: 22px;
    padding-left: 3px;
    background: #e3e3e3;
}

.properties {
    margin: 3px 0 4px;
}

.properties .grip {
    margin-right: 3px;
}

.bylayer select {
    padding: 0 0 0 4px;
    font-family: "Liberation Serif", serif;
    font-size: 12px;
}

.color {
    width: 149px;
    padding-left: 6px;
}

.swatch {
    width: 10px;
    height: 10px;
    border: 1px solid #000;
    background: #fff;
}

.linetype {
    width: 161px;
    padding-left: 6px;
}

.stroke {
    width: 60px;
    height: 1px;
    background: #000;
}

.stroke.short {
    width: 35px;
}

.lineweight {
    width: 125px;
    padding-left: 5px;
}

.bycolor {
    background: #cacaca;
    color: #777;
}

.bycolor select {
    padding: 0 0 0 10px;
    font-family: "Liberation Mono", monospace;
    font-size: 10px;
    opacity: 1;
}

.bycolor::after {
    border-color: #aaa;
}

/* --- Workspace --- */
.workspace {
    flex: 1;
    min-height: 0;
    display: flex;
}

.dock {
    width: 29px;
    overflow: hidden;
}

.dock.right {
    width: 32px;
    padding-left: 3px;
    border-left: 1px solid #4a4a4a;
}

.toolbar.vertical {
    flex-direction: column;
    width: 24px;
    height: auto;
    padding-bottom: 1px;
}

.vertical button {
    height: 22px;
}

.toolbar.vertical .grip {
    width: 14px;
    height: 4px;
    margin: 3px 0 2px;
    background: repeating-linear-gradient(90deg, #2e2e2e 0 1px, #707070 1px 2px);
}

.canvas {
    position: relative;
    flex: 1;
    min-width: 0;
    overflow: hidden;
    background: #212830;
}

.drawing {
    position: absolute;
    top: 0;
    left: 0;
    width: 100%;
    height: 100%;
}

.ucs {
    font-family: "Noto Sans", sans-serif;
    font-size: 20px;
    font-weight: 300;
    fill: #e8e8e8;
}

.view-label {
    position: absolute;
    top: 5px;
    left: 3px;
    display: flex;
    gap: 2px;
    line-height: 18px;
    color: #e2e2e2;
}

/* --- View cube --- */
.viewcube {
    position: absolute;
    top: 8px;
    right: 14px;
    width: 94px;
    height: 102px;
    display: grid;
    grid-template: 22px 1fr 22px / 28px 1fr 28px;
    place-items: center;
    font-size: 13px;
    line-height: 20px;
    color: #c3c7ca;
}

.viewcube::before {
    content: "";
    position: absolute;
    top: 8px;
    left: 4px;
    width: 86px;
    height: 86px;
    border: 10px solid #47505a;
    border-radius: 50%;
}

.viewcube > * {
    position: relative;
}

.north,
.south {
    grid-column: 1 / -1;
}

.west {
    justify-self: start;
}

.east {
    justify-self: end;
}

.face {
    width: 38px;
    height: 38px;
    border: 1px solid #8f979b;
    background: #b9bec1;
    font-size: 20px;
    line-height: 30px;
    color: #3e4a55;
}

.wcs {
    position: absolute;
    top: 122px;
    right: 38px;
    width: 47px;
    height: 17px;
    gap: 5px;
    border: 1px solid #c3c6cc;
    border-radius: 4px;
    background: #a3a7b0;
    color: #4e545c;
    font-family: "Liberation Sans", sans-serif;
    font-size: 11px;
}

.wcs i {
    width: 8px;
    height: 1px;
    background: #d8dade;
}

.navbar {
    position: absolute;
    top: 165px;
    right: 4px;
    width: 32px;
    height: 212px;
    border-radius: 4px;
    background: #61676e;
}

.navbar svg {
    width: 32px;
    height: 212px;
}

/* --- Command line --- */
.command {
    position: absolute;
    left: 257px;
    right: 0;
    bottom: 1px;
    display: flex;
    flex-direction: column;
    align-items: flex-start;
}

.history {
    margin: 0 0 4px 60px;
    padding: 0 2px;
    background: #52575c;
    color: #f2f2f2;
    font-family: "Noto Sans CJK SC", sans-serif;
    font-size: 13px;
    line-height: 16px;
    height: 16px;
    white-space: nowrap;
}

.history span {
    font-family: "DejaVu Sans Mono", monospace;
    font-size: 11px;
    white-space: pre;
}

.history.old {
    color: #c4c7ca;
}

.history:nth-of-type(2) {
    margin-bottom: 2px;
}

.command-line {
    display: flex;
    width: 100%;
    height: 26px;
    background: #bfc0c1;
}

.command-tools {
    display: flex;
    align-items: center;
    width: 54px;
    padding-left: 4px;
    background: linear-gradient(#6c6c6c, #3f3f3f);
}

.command-tools .grip {
    width: 5px;
    height: 17px;
    background: radial-gradient(#bbb 50%, transparent 50%) 0 0 / 3px 3px;
}

.command-tools button {
    width: 22px;
}

.prompt {
    display: flex;
    align-items: center;
    gap: 4px;
    padding: 0 4px;
}

.command-line input {
    flex: 1;
    min-width: 0;
    padding: 0 3px;
    background: transparent;
    font-size: 13px;
}

.command-line input::placeholder {
    color: #777;
    font-style: italic;
}

/* --- Status bar --- */
.statusbar {
    display: flex;
    height: 29px;
    background: #383634;
    border-top: 1px solid #5e5e5e;
}

.layout-tabs {
    display: flex;
    flex: 1;
    height: 17px;
    padding-left: 11px;
    color: #a8a8a8;
}

.layout-tabs button {
    width: 54px;
    background: #565656;
    clip-path: polygon(0 0, 100% 0, 90% 90%, 86% 100%, 14% 100%, 10% 90%);
}

.layout-tabs button.active {
    width: 48px;
    background: #777;
    color: #fff;
    font-weight: 700;
}

.layout-tabs button.add {
    width: 30px;
}

.layout-tabs svg {
    width: 10px;
    height: 10px;
}

.status-tools {
    display: flex;
    flex: 0 0 545px;
    gap: 2px;
    padding: 1px 0 2px;
}

.status-group {
    display: flex;
    align-items: center;
    border: 1px solid #6e6a66;
    background: #464442;
}

.status-group button {
    width: 23px;
}

.status-group .model {
    width: 28px;
    color: #fff;
}

.status-group .drop {
    width: 16px;
}

.status-group.last {
    margin-left: auto;
}

/* --- Taskbar --- */
.taskbar {
    display: flex;
    height: 40px;
    background: linear-gradient(90deg, #17292d, #1d2a29 50%, #181f26);
}

.taskbar button {
    width: 48px;
}

.apps {
    display: flex;
    gap: 1px;
    margin-left: 3px;
}

.taskbar .big {
    width: 24px;
    height: 24px;
}

.open {
    position: relative;
}

.open::after {
    content: "";
    position: absolute;
    left: 4px;
    right: 4px;
    bottom: 0;
    height: 2px;
    background: #76b9ed;
}

.open.stacked::after {
    background: linear-gradient(90deg, #76b9ed 78%, #4f7590 78%);
}

.taskbar .current {
    background: #4c5558;
}

.current::after {
    left: 0;
    right: 0;
}

.cad-icon {
    width: 24px;
    height: 24px;
    background: #f6efe8;
    color: #b8202a;
    font-family: Lato, sans-serif;
    font-size: 24px;
    line-height: 24px;
    font-weight: 900;
}

/* --- Site badge --- */
.brand {
    position: fixed;
    z-index: 5;
    right: 16px;
    bottom: 0;
    width: 379px;
    height: 190px;
    display: flex;
    align-items: center;
    padding-left: 35px;
    background: #fff;
    color: #0a0a0a;
}

.brand > svg {
    width: 100px;
    height: 82px;
}

.brand-text {
    display: flex;
    flex-direction: column;
    padding-top: 5px;
    font-style: italic;
    white-space: nowrap;
}

.brand-text strong {
    font-family: "Noto Sans CJK SC", sans-serif;
    font-size: 41px;
    line-height: 38px;
    font-weight: 900;
}

.brand-text span {
    font-size: 27px;
    line-height: 28px;
    font-weight: 600;
}
```
